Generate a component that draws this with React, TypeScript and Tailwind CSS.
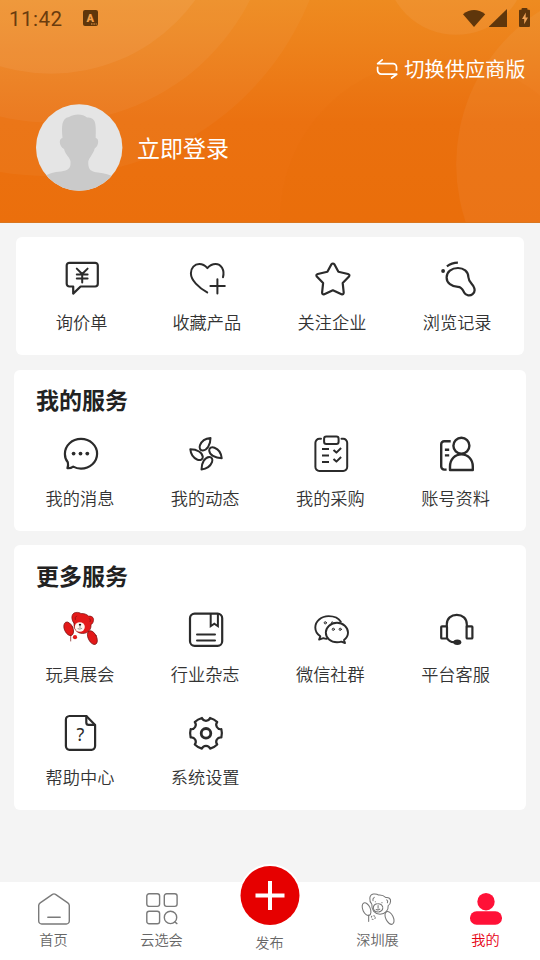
import type { ReactNode } from 'react';

const INK = '#2b2b2b';

function Icon({ children, width = 2.2 }: { children: ReactNode; width?: number }) {
  return (
    <svg className="block h-10 w-10 shrink-0" viewBox="0 0 40 40" fill="none" stroke={INK} strokeWidth={width} strokeLinecap="round" strokeLinejoin="round">
      {children}
    </svg>
  );
}

function TabIcon({ children }: { children: ReactNode }) {
  return (
    <svg className="block h-8 w-8 overflow-visible" viewBox="0 0 32 32" fill="none" stroke="#7a7a7a" strokeWidth="1.4" strokeLinecap="round" strokeLinejoin="round">
      {children}
    </svg>
  );
}

const QuoteIcon = () => (
  <Icon>
    <g transform="translate(-0.6 0)">
      <path d="M11.8 28.5H8a2.7 2.7 0 0 1-2.7-2.7V7.5A2.7 2.7 0 0 1 8 4.8h25.7a2.7 2.7 0 0 1 2.7 2.7v18.3a2.7 2.7 0 0 1-2.7 2.7H19.2L11.8 35.6Z" />
      <path strokeWidth="2" d="M15.4 10.6l5.4 5.4 5.4-5.4M20.8 16v8.4M15.4 16.6h10.8M15.4 20.5h10.8" />
    </g>
  </Icon>
);

const HeartPlusIcon = () => (
  <Icon width={2}>
    <g transform="translate(-0.4 0)">
      <path d="M20.6 34.4C12 29.6 4.3 22.2 4.3 15.2 4.3 9.9 8 6 12.7 6c3.2 0 5.8 1.5 8.1 4.1C23.1 7.500 25.800 6 29 6c5.400 0 9.300 5.800 7.400 13.200" />
      <path d="M30.800 21.200v14.200M23.800 28h14.400" />
    </g>
  </Icon>
);

const StarIcon = () => (
  <Icon>
    <path transform="translate(-0.300 0.300)" d="M19.600 6.200q1.600-2 3.200 0l3.900 7.300 9.600 2.200q2.200.8 1 2.500L31 24.800l1 9.400q-.1 2.300-2.200 1.700L21.200 32l-8.600 3.900q-2.100.6-2.200-1.700l1-9.400-6.300-6.600q-1.200-1.700 1-2.500l9.600-2.200Z" />
  </Icon>
);

const FootprintIcon = () => (
  <Icon>
    <g transform="translate(-0.400 0)">
      <circle cx="6.500" cy="13" r="1.900" fill={INK} stroke="none" />
      <path strokeLinecap="butt" d="M10.300 8.300Q15 4.900 21.300 4.700" />
      <path d="M37.300 29.200C36 26 32 23.800 31.800 19.200 31.600 13.500 27 10 21.400 10 15 10 10 14 10 19.400s5 9.200 11.400 9.400c4 .1 4.800 3.200 6.300 6 1.600 3 5.900 3.400 8.300 1.300 1.900-1.600 2.500-4.300 1.300-6.900Z" />
    </g>
  </Icon>
);

const MessageIcon = () => (
  <Icon>
    <path d="M13.200 32.600Q10.500 34.600 7.400 34.200 8.600 31.700 7.800 28.300C5.800 25.900 4.900 23 4.900 19.900 4.900 11.500 12 4.900 21 4.900s16.100 6.600 16.100 14.800S30 34.600 21 34.600q-4.300 0-7.800-2Z" />
    <g fill={INK} stroke="none">
      <circle cx="13.600" cy="19.600" r="1.900" />
      <circle cx="20.500" cy="19.600" r="1.900" />
      <circle cx="27.300" cy="19.600" r="1.900" />
    </g>
  </Icon>
);

const PinwheelIcon = () => (
  <Icon width={2}>
    {[0, 90, 180, 270].map((a) => (
      <path key={a} transform={`rotate(${a} 21 19.700)`} d="M25.500 4C20 4.500 16.300 7.800 15 11.200 13.900 14.100 15.200 16.600 17.800 16.500 22 16.200 25.500 11 25.500 4Z" />
    ))}
  </Icon>
);

const ClipboardIcon = () => (
  <Icon width={2}>
    <path d="M11 4.800H9.500A4 4 0 0 0 5.400 8.800v24.100A4 4 0 0 0 9.500 37h23.600a4 4 0 0 0 4.100-4.100V8.800a4 4 0 0 0-4.100-4H31.500" />
    <rect x="14.100" y="2.500" width="14.500" height="7.500" rx="2.200" />
    <path strokeLinecap="butt" d="M12 15h7M12 21.600h7M12 28.100h7M23.500 16l2.900 2.600 4.700-4.600M23.500 25l2.900 2.600 4.700-4.600" />
  </Icon>
);

const AccountIcon = () => (
  <Icon width={2.4}>
    <g transform="translate(-0.600 0)">
      <circle cx="26" cy="11.800" r="8" />
      <path d="M14.600 36v-3.500C14.600 25.300 19.500 20.400 26 20.400s11.400 4.900 11.400 12.100V36Z" />
      <path strokeLinecap="butt" d="M15.300 7.200H8.800a3 3 0 0 0-3 3v22.400a3 3 0 0 0 3 3h2.400M9.500 15.700h4.300M9.500 21.400h4.300" />
    </g>
  </Icon>
);

const BEAR_HEAD =
  'M14 13.200C10.700 9.500 11.200 3.200 15.500 2.500 18 2.200 19.800 2.600 21 3.600 24 3.200 26.500 4.200 28.700 6.200 31.200 5.700 34 7.300 33.500 10.300 33.300 12.600 32.300 14 31 14.600 31.500 19.500 28 23.500 22.500 23.500 17 23.400 13.500 19.300 14 13.200Z';

const RedBearIcon = () => (
  <Icon width={0.7}>
    <g stroke="#7a1010" fill="#e31919">
      <ellipse cx="8.700" cy="18.800" rx="4.300" ry="7.200" transform="rotate(-24 8.700 18.800)" />
      <ellipse cx="32.400" cy="27.600" rx="4.200" ry="7.400" transform="rotate(-26 32.400 27.600)" />
      <path d="M10.700 25v6" />
      <path d={BEAR_HEAD} />
      <path fill="none" d="M16.500 6q-2 1.200-1.300 3.500M29.500 8.600q1.700 1.200.7 3" />
      <ellipse cx="19.800" cy="17" rx="5" ry="4.800" fill="#fff6f0" stroke="none" />
      <ellipse cx="20" cy="14.700" rx="1.200" ry="0.900" fill="#111" stroke="none" />
      <path stroke="#555" strokeWidth="0.600" fill="none" d="M20 15v2.600M18 18.800q2 1 3.800-.4" />
      <circle cx="15" cy="27.200" r="2.100" stroke="none" />
    </g>
  </Icon>
);

const BearLineIcon = () => (
  <svg className="block h-8 w-8 overflow-visible" viewBox="0 0 32 32" fill="none" stroke="#777" strokeWidth="1.1" strokeLinecap="round" strokeLinejoin="round">
    <g transform="translate(-3.600 -1.400) scale(0.960)">
      <ellipse cx="8.500" cy="18.300" rx="3.900" ry="7" transform="rotate(-24 8.500 18.300)" />
      <ellipse cx="32.400" cy="27.400" rx="3.900" ry="7.200" transform="rotate(-26 32.400 27.400)" />
      <path d="M10.700 24.500v6.500" />
      <path d={BEAR_HEAD} />
      <path d="M16.500 6q-2 1.200-1.300 3.500M29.500 8.600q1.700 1.200.7 3" />
      <ellipse cx="20.500" cy="16.900" rx="4.900" ry="4.300" strokeDasharray="6 1" />
      <path d="M20.500 14.600v2.800M18.500 18.600q2 1 3.800-.4M17.600 10.500h.1M24.500 11.500h.1" />
      <circle cx="15.500" cy="27" r="2" strokeDasharray="1 2" />
    </g>
  </svg>
);

const MagazineIcon = () => (
  <Icon>
    <rect x="5" y="3.600" width="32.200" height="32.200" rx="4.600" />
    <path strokeWidth="2" strokeLinejoin="miter" d="M25.700 3.900v12.300l3.600-2.500 3.600 2.500V3.900" />
    <path strokeWidth="2" d="M12 24.400h18M12 30.600h18" />
  </Icon>
);

const WechatIcon = () => (
  <Icon width={1.9}>
    <g transform="translate(-0.200 0.500)">
      <path d="M31 11.300C29 7.800 24.400 5.600 18.800 5.600 11.400 5.600 5.500 10.700 5.500 17c0 3.700 1.900 6.700 5 8.800L9.300 29l4.300-1.400q1.500.6 3.400.7" />
      <path d="M27.200 12.300c6.200 0 11 4.400 11 9.800 0 3-1.600 5.700-4 7.400l1 3-3.700-1.400q-2 .7-4.300.7c-6.200 0-11.200-4.300-11.200-9.700s5-9.800 11.200-9.800Z" />
      <g strokeWidth="1">
        <circle cx="15.500" cy="12.300" r="1.100" />
        <path d="M21.500 11.800q1-1.200 1.900 0" />
        <circle cx="23.500" cy="18.800" r="1.100" />
        <circle cx="30.400" cy="18.800" r="1.100" />
      </g>
    </g>
  </Icon>
);

const HeadsetIcon = () => (
  <Icon>
    <g transform="translate(-0.400 0.500)">
      <rect x="5.600" y="15.800" width="5.800" height="12.200" rx="0.800" />
      <rect x="31" y="15.800" width="5.800" height="12.200" rx="0.800" />
      <path d="M11.200 16v-2.200c0-5.700 4.300-9.500 10-9.500s10 3.800 10 9.500V16M11.700 28q2 3.500 6.500 3.700" />
      <ellipse cx="21.700" cy="31.700" rx="4" ry="2.700" fill={INK} stroke="none" />
    </g>
  </Icon>
);

const HelpIcon = () => (
  <Icon>
    <path d="M26.300 3H9.500A3.700 3.700 0 0 0 5.900 6.700v26.400a3.700 3.700 0 0 0 3.600 3.700h22a3.700 3.700 0 0 0 3.600-3.700V12Z" />
    <path d="M26.300 3v6.400q0 2.400 2.400 2.400h6.100" />
    <text x="20.300" y="27.700" textAnchor="middle" fontSize="18" fill={INK} className="font-['Noto_Sans']" stroke="none">?</text>
  </Icon>
);

const deg = Math.PI / 180;
const polar = (a: number, r: number) => `${(21 + r * Math.cos(a * deg)).toFixed(2)} ${(20.3 + r * Math.sin(a * deg)).toFixed(2)}`;
const gearPath =
  [0, 60, 120, 180, 240, 300]
    .map((a, i) => `${i ? '' : `M${polar(-15, 15.9)}`}A15.900 15.900 0 0 1 ${polar(a + 15, 15.9)}A4.400 4.400 0 0 0 ${polar(a + 45, 15.9)}`)
    .join('') + 'Z';

const GearIcon = () => (
  <Icon>
    <path d={gearPath} />
    <circle cx="21" cy="20.300" r="4.800" strokeWidth="2.800" />
  </Icon>
);

type Entry = { label: string; icon: ReactNode };

const shortcuts: Entry[] = [
  { label: '询价单', icon: <QuoteIcon /> },
  { label: '收藏产品', icon: <HeartPlusIcon /> },
  { label: '关注企业', icon: <StarIcon /> },
  { label: '浏览记录', icon: <FootprintIcon /> },
];

const myServices: Entry[] = [
  { label: '我的消息', icon: <MessageIcon /> },
  { label: '我的动态', icon: <PinwheelIcon /> },
  { label: '我的采购', icon: <ClipboardIcon /> },
  { label: '账号资料', icon: <AccountIcon /> },
];

const moreServices: Entry[] = [
  { label: '玩具展会', icon: <RedBearIcon /> },
  { label: '行业杂志', icon: <MagazineIcon /> },
  { label: '微信社群', icon: <WechatIcon /> },
  { label: '平台客服', icon: <HeadsetIcon /> },
  { label: '帮助中心', icon: <HelpIcon /> },
  { label: '系统设置', icon: <GearIcon /> },
];

function EntryGrid({ entries }: { entries: Entry[] }) {
  return (
    <div className="grid grid-cols-[repeat(4,125.2px)] gap-y-[27px]">
      {entries.map((e) => (
        <div key={e.label} className="flex flex-col items-center">
          {e.icon}
          <span className="mt-3 whitespace-nowrap text-[17.2px] font-[350] leading-6 text-[#333]">{e.label}</span>
        </div>
      ))}
    </div>
  );
}

function HeaderBackdrop() {
  return (
    <svg className="absolute inset-0 h-full w-full" viewBox="0 0 540 223">
      <g fill="#fff">
        <circle cx="48" cy="-105" r="282" fillOpacity="0.035" />
        <circle cx="50" cy="-101" r="224" fillOpacity="0.045" />
        <circle cx="50" cy="-105" r="179" fillOpacity="0.060" />
        <circle cx="457" cy="-36" r="71" fillOpacity="0.060" />
        <circle cx="640" cy="165" r="183" fillOpacity="0.050" />
      </g>
      <circle cx="440" cy="220" r="160" fill="#e06000" fillOpacity="0.080" />
    </svg>
  );
}

function StatusBar() {
  return (
    <div className="flex h-9 items-center pl-[9px] pr-[9px] text-[#6a3c0e]">
      <span className="w-[74px] pt-px font-['Roboto'] text-[20.5px] leading-6 tracking-[0.5px]">11:42</span>
      <svg className="h-4 w-[15px]" viewBox="0 0 15 16">
        <rect width="15" height="16" rx="2" fill="#5f360b" />
        <text x="7.300" y="11.500" textAnchor="middle" fontSize="11" fontWeight="900" fill="#f2a04a" className="font-['Roboto']">A</text>
        <path d="M8 14h1.500M10.400 14h1.500M12.700 14h1" stroke="#f2a04a" strokeWidth="1.200" />
      </svg>
      <svg className="ml-auto h-5 w-[69px]" viewBox="0 0 69 20" fill="#5f360b">
        <path d="M1 6.200Q12 -2 23.200 6.200L12 19Z" />
        <path d="M27 19V18.500L45 1V19Z" />
        <path d="M59.500 1a1 1 0 0 1 1-1h4a1 1 0 0 1 1 1v.700H67a1 1 0 0 1 1 1V18a1 1 0 0 1-1 1h-9a1 1 0 0 1-1-1V2.700a1 1 0 0 1 1-1h1.500Z" />
        <path d="M63.800 4.500L60 11h2.200v5.300L66 9.500h-2.400Z" fill="#f0a356" />
      </svg>
    </div>
  );
}

function Tab({ label, children, active = false }: { label: string; children: ReactNode; active?: boolean }) {
  return (
    <div className={`flex flex-1 flex-col items-center pt-[11px] text-[14.2px] font-[350] leading-5 ${active ? 'text-[#e60012]' : 'text-[#666]'}`}>
      {children}
      <span className="mt-1 pr-px">{label}</span>
    </div>
  );
}

export default function App() {
  return (
    <div className="flex h-[960px] w-[540px] flex-col overflow-hidden bg-[#f4f4f4] font-['Noto_Sans_CJK_SC','Noto_Sans',sans-serif]">
      <header className="relative h-[223px] shrink-0 border-b border-[#d9761f] bg-linear-to-b from-[#ee8b20] via-[#eb7110] via-55% to-[#eb6f0c]">
        <HeaderBackdrop />
        <div className="relative">
          <StatusBar />
          <div className="mt-[18px] flex h-[30px] items-center justify-end pr-[14.5px] text-white">
            <svg className="mr-1.5 h-[22px] w-[22px]" viewBox="0 0 22 22" fill="none" stroke="#fff" strokeWidth="1.7" strokeLinecap="round" strokeLinejoin="round">
              <path d="M6.200 1.800L1.600 5.600H17a3.500 3.500 0 0 1 3.500 3.500V12M1.600 9.300V12A4 4 0 0 0 5.500 16.200H20.700L15.600 20" />
            </svg>
            <span className="text-[20.2px] leading-[30px]">切换供应商版</span>
          </div>
          <div className="mt-5 flex items-center pl-9">
            <svg className="h-[87px] w-[87px]" viewBox="0 0 87 87">
              <clipPath id="avatar"><circle cx="43.200" cy="43.500" r="43.200" /></clipPath>
              <g clipPath="url(#avatar)">
                <rect width="87" height="87" fill="#e5e5e5" />
                <path fill="#cacaca" d="M26.500 34C25.500 22 25.500 14.500 33 13 38 9.500 47 9.500 51 13.500c8 0 9.500 4 8.700 20.500 3.800.5 3 8-1 10.500-1.500 6-6 9.500-6.500 13.500 0 9 3.500 9.500 9.800 10.500 7 1 12 2 16 5V87H8V73c5-4 10-5 17-5.500 7-1 10-3 9.500-10-.5-4-5-6.500-6.500-12.500-5-2.500-5.500-10.500-1.500-11Z" />
              </g>
            </svg>
            <span className="-mt-0.5 pl-[14px] text-[23px] leading-8 text-white">立即登录</span>
          </div>
        </div>
      </header>

      <main className="flex flex-1 flex-col">
        <section className="mx-4 mt-3.5 h-[118px] rounded-md bg-white pl-[3px] pt-[21px]">
          <EntryGrid entries={shortcuts} />
        </section>
        <section className="mx-3.5 mt-[15px] h-[161px] rounded-md bg-white pl-[3.4px] pt-[13px]">
          <h2 className="mb-[19px] pl-[18.6px] text-[23px] font-bold leading-8 text-[#222]">我的服务</h2>
          <EntryGrid entries={myServices} />
        </section>
        <section className="mx-3.5 mt-3.5 h-[265px] rounded-md bg-white pl-[3.4px] pt-3.5">
          <h2 className="mb-[19px] pl-[18.6px] text-[23px] font-bold leading-8 text-[#222]">更多服务</h2>
          <EntryGrid entries={moreServices} />
        </section>
      </main>

      <nav className="flex h-[78px] shrink-0 bg-white">
        <Tab label="首页">
          <TabIcon>
            <path d="M14.500 1.300q1.500-.9 3 0L29.800 9.800q1.500 1 1.500 2.700V28a3 3 0 0 1-3 3H3.700a3 3 0 0 1-3-3V12.500q0-1.700 1.500-2.700ZM9.800 24.300h12.400" />
          </TabIcon>
        </Tab>
        <Tab label="云选会">
          <TabIcon>
            <rect x="0.800" y="0.800" width="12.800" height="12.600" rx="2.300" />
            <rect x="18.300" y="0.800" width="12.800" height="12.600" rx="2.300" />
            <rect x="0.800" y="18.200" width="12.800" height="12.600" rx="2.300" />
            <circle cx="24.500" cy="24.400" r="6.200" />
            <path d="M29 29l1.900 1.600" />
          </TabIcon>
        </Tab>
        <div className="flex flex-1 flex-col items-center text-[14.2px] font-[350] leading-5 text-[#666]">
          <div className="-mt-[18px] flex h-[62px] w-[62px] items-center justify-center rounded-full bg-white">
            <svg className="h-[60px] w-[60px]" viewBox="0 0 60 60">
              <circle cx="30" cy="30.500" r="29.500" fill="#e60000" />
              <path d="M30 16v29M15.500 30.500h29" stroke="#fff" strokeWidth="4" />
            </svg>
          </div>
          <span className="mt-1.5 pr-px">发布</span>
        </div>
        <Tab label="深圳展">
          <BearLineIcon />
        </Tab>
        <Tab label="我的" active>
          <svg className="block h-8 w-8" viewBox="0 0 32 32" fill="#ff1137">
            <circle cx="16" cy="8.700" r="8.700" />
            <rect y="18.200" width="32" height="13.600" rx="6.600" />
          </svg>
        </Tab>
      </nav>
    </div>
  );
}
